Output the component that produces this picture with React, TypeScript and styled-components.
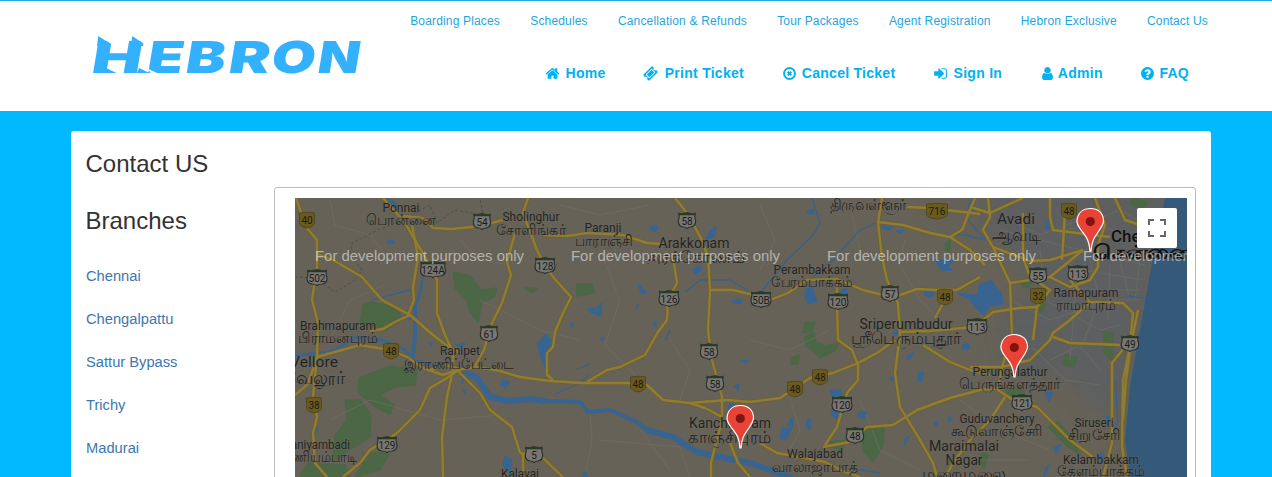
import React from "react";
import styled, { createGlobalStyle } from "styled-components";

const GlobalStyle = createGlobalStyle`
  * { box-sizing: border-box; }
  body { margin: 0; background: #00b9ff; font-family: "Liberation Sans", Arial, sans-serif; overflow: hidden; }
  a { text-decoration: none; }
`;

const Page = styled.div`
  height: 477px;
  overflow: hidden;
  background: #00b9ff;
`;
const Header = styled.header`
  height: 111px;
  background: #fff;
  border-top: 1px solid #1fa9e8;
`;
const Container = styled.div`
  width: 1140px;
  margin-left: 71px;
`;
const HeaderRow = styled(Container)`
  display: flex;
  justify-content: space-between;
`;
const Brand = styled.a`
  display: block;
  padding: 30px 0 0 19px;
`;
const LogoSvg = styled.svg`
  display: block;
  overflow: visible;
`;
const Navs = styled.div`
  display: flex;
  flex-direction: column;
  align-items: flex-end;
`;
const TopNav = styled.nav`
  display: flex;
  gap: 30.2px;
  padding: 13px 3px 0 0;
  height: 62px;
`;
const TopLink = styled.a`
  color: #1ea5de;
  font-size: 12px;
  line-height: 14px;
  letter-spacing: 0.165px;
  white-space: nowrap;
`;
const MainNav = styled.nav`
  display: flex;
  padding-right: 22px;
  gap: 37.7px;
`;
const NavLink = styled.a`
  display: flex;
  align-items: center;
  height: 20px;
  color: #00b1f5;
  font-size: 14px;
  font-weight: bold;
  letter-spacing: 0.27px;
  white-space: nowrap;
`;
const NavIcon = styled.svg<{ $gap: number }>`
  width: 15px;
  height: 15px;
  margin-right: ${(p) => p.$gap}px;
  fill: currentColor;
`;
const Card = styled(Container).attrs({ as: "main" })`
  margin-top: 20px;
  height: 420px;
  padding: 0 15px;
  background: #fff;
  border-radius: 3px;
`;
const Title = styled.h1`
  margin: 0 0 0 -0.500px;
  padding-top: 20px;
  height: 56px;
  font-size: 24px;
  line-height: 26px;
  font-weight: normal;
  color: #333;
`;
const Columns = styled.div`
  display: flex;
`;
const Sidebar = styled.aside`
  width: 188px;
  flex: none;
`;
const SideTitle = styled.h2`
  margin: 21px 0 32px -0.500px;
  font-size: 24px;
  line-height: 26px;
  font-weight: normal;
  color: #333;
`;
const BranchList = styled.ul`
  display: grid;
  gap: 23px;
  margin: 0;
  padding: 0;
  list-style: none;
`;
const BranchLink = styled.a`
  display: block;
  color: #3c77ae;
  font-size: 14.7px;
  line-height: 20px;
`;
const MapPanel = styled.section`
  width: 922px;
  height: 400px;
  flex: none;
  padding: 10px 8px 0 20px;
  border: 1px solid #bdbdbd;
  border-radius: 3px;
`;
const MapView = styled.div`
  position: relative;
  width: 892px;
  height: 279px;
`;
const MapSvg = styled.svg`
  display: block;
  width: 892px;
  height: 279px;
`;
const FullscreenButton = styled.button`
  position: absolute;
  top: 10px;
  right: 10px;
  width: 40px;
  height: 40px;
  display: grid;
  place-items: center;
  padding: 0;
  border: 0;
  border-radius: 2px;
  background: #fff;
`;

const icons: Record<string, string> = {
  home: "M1472 992v480q0 26-19 45t-45 19h-384v-384h-256v384h-384q-26 0-45-19t-19-45v-480q0-1 .5-3t.5-3l575-474 575 474q1 2 1 6zm223-69l-62 74q-8 9-21 11h-3q-13 0-21-7l-692-577-692 577q-12 8-24 7-13-2-21-11l-62-74q-8-10-7-23.5t11-21.5l719-599q32-26 76-26t76 26l244 204v-195q0-14 9-23t23-9h192q14 0 23 9t9 23v408l219 182q10 8 11 21.5t-7 23.5z",
  ticket:
    "M1024 452l316 316-572 572-316-316zm-211 979l618-618q19-19 19-45t-19-45l-362-362q-18-18-45-18t-45 18l-618 618q-19 19-19 45t19 45l362 362q18 18 45 18t45-18zm889-637l-907 908q-37 37-90.5 37t-90.5-37l-126-125q56-56 56-136t-56-136-136-56-136 56l-125-126q-37-37-37-90.5t37-90.5l907-906q37-37 90.5-37t90.5 37l125 125q-56 56-56 136t56 136 136 56 136-56l126 125q37 37 37 90.5t-37 90.5z",
  cancel:
    "M1664 896a768 768 0 1 1-1536 0a768 768 0 1 1 1536 0zM1430 896a534 534 0 1 0-1068 0a534 534 0 1 0 1068 0zM896 724l130-130 172 172-130 130 130 130-172 172-130-130-130 130-172-172 130-130-130-130 172-172z",
  signin:
    "M1312 896q0 26-19 45l-544 544q-19 19-45 19t-45-19-19-45v-288h-448q-26 0-45-19t-19-45v-384q0-26 19-45t45-19h448v-288q0-26 19-45t45-19 45 19l544 544q19 19 19 45zm352-352v704q0 119-84.5 203.5t-203.5 84.5h-320q-13 0-22.5-9.5t-9.5-22.5q0-4-1-20t-.5-26.5 3-23.5 10-19.5 20.5-6.5h320q66 0 113-47t47-113v-704q0-66-47-113t-113-47h-312l-11.5-1-11.5-3-8-5.5-7-9-2-13.5q0-4-1-20t-.5-26.5 3-23.5 10-19.5 20.5-6.5h320q119 0 203.5 84.5t84.5 203.5z",
  user: "M1536 1399q0 109-62.5 187t-150.5 78h-854q-88 0-150.5-78t-62.5-187q0-85 8.5-160.5t31.5-152 58.5-131 94-89 134.5-34.5q131 128 313 128t313-128q76 0 134.5 34.5t94 89 58.5 131 31.5 152 8.5 160.5zm-256-887q0 159-112.5 271.5t-271.5 112.5-271.5-112.5-112.5-271.5 112.5-271.5 271.5-112.5 271.5 112.5 112.5 271.5z",
  question:
    "M1024 1376v-192q0-14-9-23t-23-9h-192q-14 0-23 9t-9 23v192q0 14 9 23t23 9h192q14 0 23-9t9-23zm256-672q0-88-55.5-163t-138.5-116-170-41q-243 0-371 213-15 24 8 42l132 100q7 6 19 6 16 0 25-12 53-68 86-92 34-24 86-24 48 0 85.5 26t37.5 59q0 38-20 61t-68 45q-63 28-115.5 86.5t-52.5 125.5v36q0 14 9 23t23 9h192q14 0 23-9t9-23q0-19 21.5-49.5t54.5-49.5q32-18 49-28.5t46-35 44.5-48 28-60.5 12.5-81zm384 192q0 209-103 385.5t-279.5 279.5-385.5 103-385.5-103-279.5-279.5-103-385.5 103-385.5 279.5-279.5 385.5-103 385.5 103 279.5 279.5 103 385.5z",
};

const topLinks = [
  "Boarding Places", "Schedules", "Cancellation & Refunds", "Tour Packages",
  "Agent Registration", "Hebron Exclusive", "Contact Us",
];
const mainLinks: [string, string, number][] = [
  ["home", "Home", 5.5],
  ["ticket", "Print Ticket", 6.5],
  ["cancel", "Cancel Ticket", 5.2],
  ["signin", "Sign In", 5.5],
  ["user", "Admin", 3],
  ["question", "FAQ", 4],
];
const branches = ["Chennai", "Chengalpattu", "Sattur Bypass", "Trichy", "Madurai"];

/* letter, left edge, width */
const logoLetters: [string, number, number][] = [
  ["H", 90, 50], ["E", 145.5, 36], ["B", 184, 39.5], ["R", 227, 41], ["O", 269.5, 44], ["N", 316, 42],
];

const Logo = () => (
  <LogoSvg width="275" height="44" viewBox="90 31 275 44" aria-label="Hebron">
    <g fill="#33b1ff" fontFamily="Inter, sans-serif" fontWeight="900" fontSize="44">
      {logoLetters.map(([c, x, w]) => (
        <text key={c} transform={`translate(${x} 73) skewX(-9.500)`} textLength={w} lengthAdjust="spacingAndGlyphs">{c}</text>
      ))}
    </g>
    <path d="M98 35.500L110.500 43.500L115 44V36ZM132 35.500L143.500 43.500L147 44V36Z" fill="#fff" />
    <path d="M98.200 36L110 43.500V46H97zM132.200 36L143.300 43.500V46H131zM106 68L116.500 73H104zM139 68L149.500 73H137z" fill="#33b1ff" />
    <path d="M147.500 68.500L158 73.500H151z" fill="#fff" />
  </LogoSvg>
);

/* ---------- Map geometry ---------- */
const roads = [
  "296,198 306,227 317,240 317,267 312,300 318,323 317,357 313,397 317,417 313,433 315,463 327,477",
  "317,254 333,260 362,277 382,300 410,315 433,335 446,345 458,352",
  "410,315 395,322 383,329 370,331",
  "383,198 405,223 428,262 437,280 437,313 445,335 453,352 453,370",
  "412,225 418,257 413,287 414,300 408,315",
  "403,216 423,218 433,228 452,229 480,226 503,220",
  "515,233 507,262 511,275 502,303 491,325 484,350 475,366",
  "528,198 523,213 537,250 543,262 553,277 571,297 563,313 555,332 553,347 547,353 547,375 553,380",
  "543,235 567,236 587,233 623,235 647,243 663,244",
  "675,198 687,213 702,240 708,257 710,290 708,330 712,360 722,397 722,420 715,447 711,463 711,477",
  "673,257 677,283 668,300 667,320 658,332 645,355 620,367 607,370 587,382",
  "710,290 733,290 750,294 770,300 788,293 807,280 837,279 863,290 883,295 900,295 917,289 937,290 957,290 980,277",
  "882,198 878,223 882,257 887,280 898,303 900,335 895,373 900,407 920,440 933,463 937,477",
  "878,222 903,225 930,233 950,237 970,250 985,265",
  "950,237 962,230 968,215 975,198",
  "907,207 930,208 980,214",
  "837,279 837,300 838,340 852,350 858,365 858,380 847,393 842,410 837,427 825,445",
  "520,377 550,381 583,383 630,383 647,385 663,400 690,403 727,400 750,402 780,398 810,378 833,373 858,363 877,353 895,340",
  "690,403 705,408 722,417",
  "295,395 308,384 317,357 360,345 390,350 407,357 423,368 443,375 457,370 477,367 500,371 520,377",
  "430,370 445,365 460,369 447,378",
  "457,370 480,393 490,410 512,427 520,453",
  "520,453 543,458 563,477",
  "523,453 523,477",
  "453,370 447,397 442,437 443,477",
  "447,378 430,388 420,410 397,433 370,450 360,463 343,477",
  "823,447 850,442 867,427 893,425 917,410 950,398 980,390 998,388",
  "760,443 777,453 800,457 825,462 845,472 860,477",
  "730,443 738,463 750,477",
  "923,345 950,362 970,370 990,375",
  "900,332 930,331 975,327 993,312 1020,308 1037,307",
  "935,318 945,300 940,290",
  "988,198 990,217 983,230 993,247 1010,283 1012,335 1002,367",
  "970,207 990,213 1023,198",
  "1023,213 1023,257 1030,277 1050,290 1037,307 1033,340",
  "993,247 1030,261 1050,260 1083,250",
  "1050,198 1050,217 1053,230 1077,233 1110,237",
  "1065,213 1062,260",
  "1083,250 1050,277 1010,283",
  "1050,277 1070,287 1090,280 1098,267 1098,245 1105,225 1095,198",
  "1070,280 1090,302 1123,303 1133,313 1130,347 1123,380 1122,447 1127,477",
  "1090,302 1070,320 1053,333 1050,340 1030,360 1002,367 970,367",
  "1053,337 1070,343 1120,345",
  "1138,310 1131,345 1126,380 1123,420",
  "1125,347 1112,363 1112,443 1103,477",
  "1002,367 998,390 1013,400 1037,407 1070,440 1093,457",
  "1005,397 990,420 970,440 955,460 945,477",
  "1115,198 1125,220 1140,225",
];
const minorRoads = [
  "330,200 335,225 370,235 390,260", "330,340 350,300 385,285", "460,240 480,260 510,265", "560,205 600,215 650,205",
  "600,250 620,300 605,345 640,380", "480,300 540,330 580,340", "590,412 592,440 585,477", "640,430 670,470",
  "760,205 775,240 760,270", "750,340 790,350 830,330", "790,400 800,430 790,450", "905,240 900,265 920,300 950,330",
  "330,420 370,400 440,420 500,415", "600,440 680,447 690,477", "850,205 860,250 890,260", "670,340 690,370 680,400",
  "1000,215 1040,235 1080,220 1130,235", "1000,230 1060,245 1145,265", "1040,250 1045,300 1100,330 1120,325",
  "1010,300 1050,320 1110,300 1140,300", "1070,260 1075,300 1070,360", "1090,260 1100,300 1080,350",
  "1110,265 1108,320", "1120,262 1130,300", "1035,350 1065,380 1100,385", "1050,360 1080,345 1100,370",
  "1080,270 1145,280", "1085,290 1140,290", "1145,220 1135,300", "1010,345 1040,350", "1075,205 1070,230 1120,210 1155,230",
  "940,440 980,460 1030,460", "960,400 1000,430 1050,450", "860,400 880,450 920,470",
];
const greens = [
  "453,272 470,276 481,290 497,288 494,297 482,302 478,322 470,312 467,300 455,288",
  "372,302 395,307 403,319 386,330 360,323 363,305",
  "359,378 390,366 417,370 415,385 395,387 380,395 394,405 390,414 375,407 358,392",
  "345,400 360,400 371,415 370,437 352,448 333,462 335,436 347,420",
  "363,453 390,453 380,470 355,477 363,465",
  "308,463 345,465 350,477 300,477",
  "577,284 592,284 594,293 577,296",
  "524,288 537,288 533,293",
  "805,337 814,333 816,342 825,346 838,343 836,350 820,358 812,350 806,346",
  "792,358 799,355 798,364 791,364",
  "805,323 815,322 812,332 803,333",
  "863,430 884,427 883,445 873,462 863,450",
  "830,442 848,440 840,450 828,446",
  "1104,332 1113,332 1112,360 1104,353",
  "1065,354 1077,358 1074,367 1063,364",
  "1006,389 1023,389 1025,397 1010,399",
  "1048,427 1058,422 1075,440 1080,455 1068,447",
  "946,243 950,240 950,252 945,250",
  "982,453 988,455 984,468 978,462",
  "1020,280 1030,280 1030,288 1022,287",
  "1040,303 1046,304 1043,312 1036,309",
  "1132,198 1148,202 1142,210 1130,204",
];
const lakes = [
  "388,240 393,240 395,243 388,244", "388,198 396,203 397,207 390,204",
  "537,343 546,334 551,340 546,369 541,358", "587,309 596,308 602,303 601,316 590,312",
  "650,226 658,226 656,232 649,229", "636,306 639,304 636,309",
  "709,232 716,226 715,236 706,240", "692,270 700,265 702,269 696,275", "732,301 741,299 742,303 734,304",
  "807,211 814,209 814,214 808,214", "806,289 812,287 817,302 808,304 805,297", "842,290 847,288 846,297 840,294",
  "882,226 893,226 890,230 883,229", "896,231 905,230 900,234",
  "926,290 936,290 931,298 924,295", "935,260 954,260 948,267 953,270 942,271",
  "957,293 978,295 979,285 991,280 996,287 1001,292 1003,304 990,306 983,315 976,308 970,300",
  "830,390 841,390 842,395 832,397", "833,405 845,410 840,421 831,415",
  "860,411 866,412 864,419 857,416", "782,428 792,428 786,440 780,438", "790,420 793,417 793,427 787,425", "807,419 811,420 810,430 806,427",
  "889,378 894,377 892,382", "919,372 924,372 921,383 918,380", "906,357 914,352 910,360", "962,345 968,343 970,349 962,349",
  "948,417 953,419 949,422", "934,423 939,421 936,427", "904,440 909,436 905,445",
  "503,380 510,382 506,388 500,385", "505,456 512,460 510,475 503,465", "461,380 464,380 462,384", "463,389 466,390 465,394",
  "403,317 411,315 410,320", "455,345 465,343 462,348", "315,428 318,427 317,433", "302,441 306,441 306,444",
  "730,403 734,404 732,413 728,409", "734,386 739,384 738,391", "740,361 750,360 746,363",
  "970,200 974,200 974,211 968,208", "1047,222 1053,221 1050,230 1045,228", "1045,392 1053,393 1049,402", "1054,448 1061,444 1056,454",
  "1098,455 1104,452 1102,462", "1106,415 1111,418 1107,424", "585,471 588,477 582,477", "814,455 818,456 815,459",
  "570,324 574,323 572,328", "638,284 647,293 641,293", "653,322 657,323 655,327", "600,338 604,338 602,342", "430,343 433,344 431,346",
  "1046,466 1050,465 1044,477", "895,330 902,330 901,335 894,335",
];
const streams = [
  "812,198 820,223 813,235 787,260 777,273 757,297", "878,222 860,230 833,260 813,277",
  "685,292 700,280 730,280 750,292", "555,394 575,385 590,375", "1128,296 1145,298",
  "670,330 665,340", "575,370 590,364",
  "1115,380 1118,420 1110,450 1100,477", "968,220 985,240 965,235 945,235", "860,470 880,473", "410,290 372,300",
];

type Shield = [number, number, string, boolean];
const shields: Shield[] = [
  [307, 220, "40", true], [482, 221, "54", false], [433, 269, "124A", false], [317, 277, "502", false],
  [545, 265, "128", false], [687, 220, "58", false], [669, 298, "126", false], [761, 299, "50B", false],
  [838, 301, "120", false], [890, 293, "57", false], [937, 211, "716", true], [945, 297, "48", true],
  [977, 326, "113", false], [1038, 275, "55", false], [1078, 273, "113", false], [1038, 296, "32", true],
  [1069, 211, "48", true], [489, 333, "61", false], [391, 351, "48", true], [314, 405, "38", true],
  [387, 444, "129", false], [709, 351, "58", false], [715, 383, "58", false], [638, 384, "48", true],
  [534, 454, "5", false], [820, 377, "48", true], [795, 389, "48", true], [842, 404, "120", false],
  [855, 435, "48", false], [1130, 343, "49", false], [1022, 402, "121", false],
];

type Label = [number, number, string, number, number];
/* centre x, baseline y, text, drawn width, font size */
const labels: Label[] = [
  [401, 212, "Ponnai", 37, 12], [401, 225, "பொன்னை", 70, 14.5],
  [531, 221, "Sholinghur", 57, 12], [531, 235, "சோளிங்கர்", 70, 14.5],
  [603, 232, "Paranji", 37, 12], [604, 246, "பாராஞ்சி", 58, 14.5],
  [694, 248, "Arakkonam", 71, 14.5], [694, 263, "அரக்கோணம்", 102, 17],
  [868, 210, "திருவள்ளூர்", 77, 15.5],
  [812, 274, "Perambakkam", 77, 12], [812, 287, "பேரம்பாக்கம்", 82, 14.5],
  [1016, 224, "Avadi", 38, 15], [1016, 241, "ஆவடி", 49, 17.5],
  [1086, 297, "Ramapuram", 65, 12], [1086, 310, "ராமாபுரம்", 60, 14.5],
  [338, 330, "Brahmapuram", 76, 12], [338, 343, "பிராமனபுரம்", 80, 14.5],
  [906, 329, "Sriperumbudur", 93, 14.5], [906, 344, "ஸ்ரீபெரும்புதூர்", 111, 17],
  [314, 367, "Vellore", 48, 15], [314, 384, "வேலூர்", 62, 18],
  [460, 355, "Ranipet", 40, 12], [459, 369, "இராணிப்பேட்டை", 110, 14.5],
  [317, 449, "Vaniyambadi", 66, 12], [315, 462, "வாணியம்பாடி", 84, 14.5],
  [730, 428, "Kanchipuram", 82, 14.5], [730, 443, "காஞ்சிபுரம்", 84, 17],
  [815, 458, "Walajabad", 56, 12], [815, 472, "வாலாஜாபாத்", 86, 14.5],
  [1010, 376, "Perungalathur", 75, 12], [1010, 389, "பெருங்களத்தூர்", 102, 14.5],
  [997, 423, "Guduvanchery", 75, 12], [997, 436, "கூடுவாஞ்சேரி", 92, 14.5],
  [964, 451, "Maraimalai", 70, 14.5], [964, 465, "Nagar", 37, 14.5], [964, 480, "மறைமலை", 84, 17],
  [1094, 427, "Siruseri", 39, 12], [1094, 440, "சிறுசேரி", 53, 14.5],
  [1101, 464, "Kelambakkam", 76, 12], [1101, 476, "கேளம்பாக்கம்", 88, 14.5],
  [520, 478, "Kalavai", 38, 12],
];
const pins = [[1090, 251], [1014, 377], [740, 448]];

const NationalShield = ({ x, y, n }: { x: number; y: number; n: string }) => {
  const w = n.length > 2 ? 10.5 : 7.5;
  return (
    <g transform={`translate(${x} ${y})`}>
      <path d={`M${-w} -7Q0 -8.500 ${w} -7V4Q${w - 2} 7 0 8Q${-w + 2} 7 ${-w} 4Z`} fill="#6b5a1d" stroke="#4b411d" strokeWidth=".8" />
      <text y="4" fontSize="10" textAnchor="middle" fill="#1d1b12">{n}</text>
    </g>
  );
};
const StateShield = ({ x, y, n }: { x: number; y: number; n: string }) => {
  const w = n.length > 3 ? 12.5 : n.length > 2 ? 10 : 8.7;
  return (
    <g transform={`translate(${x} ${y})`}>
      <path d={`M${-w + 1} -6H${w - 1}Q${w - 1} -2 ${w} 1Q${w} 6.500 ${w - 5} 7Q2 7 0 8.500Q-2 7 ${-w + 5} 7Q${-w} 6.500 ${-w} 1Q${-w + 1} -2 ${-w + 1} -6Z`} fill="#777671" stroke="#2b2e2b" strokeWidth="1.100" />
      <path d={`M${-w} -7.500L${-w + 3} -6.500L0 -8L${w - 3} -6.500L${w} -7.500V-4.800H${-w}Z`} fill="#2b3929" />
      <text y="5" fontSize="10" textAnchor="middle" fill="#1b1b1b">{n}</text>
    </g>
  );
};

const RouteMap = () => (
  <MapSvg viewBox="295 198 892 279" fontFamily="Roboto, 'Noto Sans', sans-serif">
    <defs>
      <filter id="soften"><feGaussianBlur stdDeviation="9" /></filter>
    </defs>
    <rect x="295" y="198" width="892" height="279" fill="#666257" />
    <path filter="url(#soften)" d="M985 190H1180L1150 300L1130 410H1095L1060 372L1010 365L1000 310L1040 295L1015 255L980 225Z" fill="#5d5e61" />
    <path d="M930 205H965V218H940ZM1000 345H1050V370H1000Z" fill="#5d5e61" opacity=".6" filter="url(#soften)" />
    {greens.map((p) => <polygon key={p} points={p} fill="#4b6746" stroke="#4b6746" strokeWidth="1.500" strokeLinejoin="round" />)}
    <g fill="none" stroke="#74716a" strokeWidth=".9" opacity=".65">
      {minorRoads.map((p) => <polyline key={p} points={p} />)}
    </g>
    <g fill="none" stroke="#4c4a43" strokeWidth=".8" strokeDasharray="3 2">
      <polyline points="295,277 315,278 335,292 355,280 362,270 350,255 352,243 378,230 400,221 430,205 437,223 455,210 483,215 480,198" />
    </g>
    <g fill="none" stroke="#39618a" strokeWidth="1.300" strokeLinejoin="round">
      {streams.map((p) => <polyline key={p} points={p} />)}
    </g>
    {lakes.map((p) => <polygon key={p} points={p} fill="#386491" stroke="#386491" strokeWidth="1" strokeLinejoin="round" />)}
    <g fill="none" stroke="#386491" strokeLinejoin="round" strokeLinecap="round">
      <polyline strokeWidth="3" points="293,356 330,352 357,337 383,340 405,350 413,360 443,367" />
      <polyline strokeWidth="2.500" points="423,275 421,290 415,307" />
      <polyline strokeWidth="4" points="415,307 415,335 413,357" />
      <polyline strokeWidth="6" points="457,368 477,378 490,397 508,401 530,399 545,401" />
      <polyline strokeWidth="4" points="545,401 580,402 588,412 610,410 637,422 647,430" />
      <polyline strokeWidth="6" points="647,430 673,437 697,452 720,457 750,463 770,470 790,477" />
    </g>
    <path d="M1165 198L1157 240L1152 263L1140 330L1130 387L1125 440L1130 477H1187V198Z" fill="#355978" />
    <g fill="none" stroke="#6f602f" strokeWidth="4" strokeLinejoin="round">
      {roads.map((p) => <polyline key={p} points={p} />)}
    </g>
    <g fill="none" stroke="#8f7d36" strokeWidth="2.400" strokeLinejoin="round">
      {roads.map((p) => <polyline key={p} points={p} />)}
    </g>
    {shields.map(([x, y, n, national]) =>
      national ? <NationalShield key={`${x}-${y}`} x={x} y={y} n={n} /> : <StateShield key={`${x}-${y}`} x={x} y={y} n={n} />
    )}
    <g fill="#242423" textAnchor="middle" stroke="#716e66" strokeWidth="1.200" strokeOpacity=".5" paintOrder="stroke" strokeLinejoin="round">
      {labels.map(([x, y, t, w, s]) => (
        <text key={t} x={x} y={y} fontSize={s} textLength={w} lengthAdjust="spacingAndGlyphs">{t}</text>
      ))}
      <text x="1111" y="242" fontSize="17" textAnchor="start" fontWeight="500" fill="#111">Chennai</text>
      <text x="1093" y="259" fontSize="20" textAnchor="start" fontWeight="600" fill="#111" textLength="98" lengthAdjust="spacingAndGlyphs">சென்னை</text>
    </g>
    <g fill="#fff" fillOpacity=".52" fontFamily="'Liberation Sans', Arial, sans-serif" fontSize="15.500">
      {[315, 571, 827, 1083].map((x) => (
        <text key={x} x={x} y="260.500" textLength="209" lengthAdjust="spacingAndGlyphs">For development purposes only</text>
      ))}
    </g>
    {pins.map(([x, y]) => (
      <g key={x} transform={`translate(${x} ${y})`}>
        <path d="M0 0C-1 -12 -4 -14 -9 -21C-12 -25 -13.500 -28 -13 -31C-12 -38 -7 -42.500 0.500 -42.500C8 -42.500 13 -38 13.500 -31C14 -28 12 -25 9.500 -21C5 -14 2 -12 1 0Z" fill="#ea4335" stroke="#fff" strokeWidth="1.200" />
        <circle cx=".3" cy="-29.500" r="4.600" fill="#811411" />
      </g>
    ))}
  </MapSvg>
);

export default function App() {
  return (
    <Page>
      <GlobalStyle />
      <Header>
        <HeaderRow>
          <Brand href="#"><Logo /></Brand>
          <Navs>
            <TopNav>{topLinks.map((t) => <TopLink key={t} href="#">{t}</TopLink>)}</TopNav>
            <MainNav>
              {mainLinks.map(([icon, text, gap]) => (
                <NavLink key={text} href="#">
                  <NavIcon $gap={gap} viewBox="0 0 1792 1792"><path fillRule="evenodd" d={icons[icon]} /></NavIcon>
                  {text}
                </NavLink>
              ))}
            </MainNav>
          </Navs>
        </HeaderRow>
      </Header>
      <Card>
        <Title>Contact US</Title>
        <Columns>
          <Sidebar>
            <SideTitle>Branches</SideTitle>
            <BranchList>
              {branches.map((b) => <li key={b}><BranchLink href="#">{b}</BranchLink></li>)}
            </BranchList>
          </Sidebar>
          <MapPanel>
            <MapView>
              <RouteMap />
              <FullscreenButton aria-label="Toggle fullscreen view">
                <svg width="18" height="18" viewBox="0 0 18 18" fill="none" stroke="#666" strokeWidth="2">
                  <path d="M1 6V1H6M12 1H17V6M17 12V17H12M6 17H1V12" />
                </svg>
              </FullscreenButton>
            </MapView>
          </MapPanel>
        </Columns>
      </Card>
    </Page>
  );
}
